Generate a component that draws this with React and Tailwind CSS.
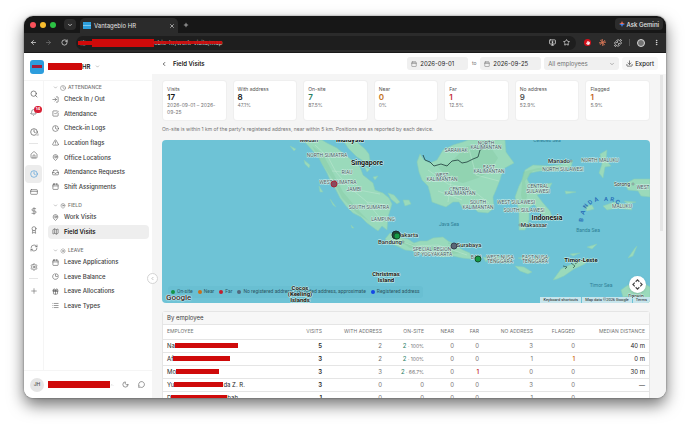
import React, { useState } from 'react';
import {
  ArrowLeft, ArrowRight, RotateCw, ChevronDown, ChevronLeft, X, Plus, Star, MonitorDown, Puzzle,
  EllipsisVertical, Search, Bell, Clock, House, CreditCard, DollarSign, Award, RefreshCw, Settings,
  LogIn, SquareCheckBig, TriangleAlert, MapPin, Inbox, Calendar, Map as MapIcon, Gift, List, Sun,
  ChartPie, Moon, MessageCircle, Download, SlidersHorizontal, ChevronUp, Hand,
} from 'lucide-react';
import clsx from 'clsx';

const NAV = [
  {
    title: 'ATTENDANCE',
    icon: Clock,
    height: 'h-[102px]',
    items: [
      { label: 'Check In / Out', icon: LogIn },
      { label: 'Attendance', icon: SquareCheckBig },
      { label: 'Check-in Logs', icon: Clock },
      { label: 'Location flags', icon: TriangleAlert },
      { label: 'Office Locations', icon: MapPin },
      { label: 'Attendance Requests', icon: Inbox },
      { label: 'Shift Assignments', icon: Calendar },
    ],
  },
  {
    title: 'FIELD',
    icon: MapPin,
    height: 'h-[29px]',
    items: [
      { label: 'Work Visits', icon: MapPin },
      { label: 'Field Visits', icon: MapIcon, active: true },
    ],
  },
  {
    title: 'LEAVE',
    icon: Sun,
    height: 'h-[58px]',
    items: [
      { label: 'Leave Applications', icon: Calendar },
      { label: 'Leave Balance', icon: ChartPie },
      { label: 'Leave Allocations', icon: Gift },
      { label: 'Leave Types', icon: List },
    ],
  },
];

const RAIL = [
  { label: 'Home', icon: House },
  { label: 'Attendance', icon: Clock, active: true },
  { label: 'Cards', icon: CreditCard },
  { label: 'Payroll', icon: DollarSign },
  { label: 'Performance', icon: Award },
  { label: 'Sync', icon: RefreshCw },
  { label: 'Settings', icon: Settings },
];

const STATS = [
  { label: 'Visits', value: '17', note: '2026-09-01 – 2026-09-25', color: 'text-neutral-900' },
  { label: 'With address', value: '8', note: '47.1%', color: 'text-neutral-900' },
  { label: 'On-site', value: '7', note: '87.5%', color: 'text-[#2a8064]' },
  { label: 'Near', value: '0', note: '0%', color: 'text-[#c2741c]' },
  { label: 'Far', value: '1', note: '12.5%', color: 'text-[#c42f3a]' },
  { label: 'No address', value: '9', note: '52.9%', color: 'text-neutral-600' },
  { label: 'Flagged', value: '1', note: '5.9%', color: 'text-[#c2621c]' },
];

const ROWS = [
  { start: 'Na', end: '', mask: 'w-[63px]', visits: 5, withAddress: 2, onSite: 2, pct: '100%', near: 0, far: 0, none: 3, flagged: 0, median: '40 m' },
  { start: 'Af', end: '', mask: 'w-[57px]', visits: 3, withAddress: 2, onSite: 2, pct: '100%', near: 0, far: 0, none: 1, flagged: 1, median: '0 m' },
  { start: 'Mo', end: '', mask: 'w-[43px]', visits: 3, withAddress: 3, onSite: 2, pct: '66.7%', near: 0, far: 1, none: 0, flagged: 0, median: '30 m' },
  { start: 'Yu', end: 'da Z. R.', mask: 'w-[49px]', visits: 3, withAddress: 0, onSite: 0, near: 0, far: 0, none: 3, flagged: 0, median: '—' },
  { start: 'D', end: 'bah', mask: 'w-[56px]', visits: 1, withAddress: 0, onSite: 0, near: 0, far: 0, none: 1, flagged: 0, median: '—' },
];

const LAND = [
  // Sumatra and its islands
  'M141 0 150 10 157 18 160 24 165 33 169 42 174 50 178 58 184 66 191 73 199 77 205 83 216 91 220 86 225 90 226 77 230 64 227 58 221 53 213 50 211 43 206 39 201 35 198 27 190 20 183 15 175 8 165 3 160 0Z',
  'M128 6 134 9 132 11Z M142 20 148 25 147 28 143 24Z M157 46 161 52 158 52Z M168 59 174 67 171 65Z M189 85 192 88 190 88Z',
  'M226 53 232 55 238 62 235 64 229 59Z M241 60 247 60 249 64 243 66Z M211 37 216 36 213 40Z M202 26 208 29 205 32Z',
  // Malay peninsula
  'M181 0 186 8 195 17 203 22 208 20 207 14 203 9 196 3 194 0Z',
  // Java
  'M223 99 228 93 234 95 240 98 246 99 252 103 258 101 265 101 271 98 281 97 286 101 292 104 301 110 308 113 309 119 300 118 291 116 280 117 271 114 260 114 251 111 243 110 235 106 228 103Z M286 103 297 104 296 106Z',
  'M311 116 318 117 316 120Z M321 117 326 118 324 122Z M330 118 337 116 341 119 351 118 348 122 336 121Z M356 118 366 117 376 119 388 117 384 121 370 121Z M353 126 362 127 370 132 366 134 358 131Z',
  // Borneo
  'M258 14 262 20 268 23 275 20 281 10 291 5 301 2 306 0 343 0 344 12 352 23 341 29 338 40 334 50 331 57 332 68 326 73 316 72 310 66 301 69 297 62 291 62 284 67 278 65 270 62 268 53 266 46 260 40 257 32 255 22Z',
  // Sulawesi
  'M360 40 363 30 371 25 388 26 401 24 411 20 409 27 396 31 378 31 368 33 365 39 368 45 378 45 390 43 386 51 375 55 381 63 388 71 391 80 385 79 378 72 372 64 367 68 367 80 363 90 357 90 357 70 353 57 357 46Z',
  // Maluku and Papua
  'M438 14 445 10 444 20 449 26 443 27 441 38 437 33 440 24Z M441 66 452 62 468 66 470 70 455 68 445 70Z M422 66 430 65 432 69 425 71Z M403 51 414 52 404 54Z',
  'M463 44 472 39 488 39 488 57 479 56 476 51 466 50Z M466 118 473 108 475 106 471 116Z M462 61 474 62 466 64Z',
  // Timor and Australia
  'M391 140 399 129 412 123 426 118 423 124 412 129 402 136 395 139Z M425 107 435 104 430 109Z M408 114 418 113 411 116Z',
  'M459 150 466 145 474 147 480 142 488 147 488 163 478 163 470 156 461 157Z',
];

const HIGHLANDS = [
  'M150 6 160 13 170 31 181 52 197 71 207 81 195 73 180 58 171 40 161 25Z',
  'M305 6 327 5 336 18 327 32 316 38 301 43 287 39 276 27 289 22Z',
  'M238 101 258 106 278 108 300 113 290 114 268 111 248 108Z',
  'M361 32 376 28 400 27 371 31 363 41 365 56 362 68 359 55Z',
];

const REGIONS = [
  [165, 17, 'NORTH SUMATRA'], [185, 34, 'RIAU'], [176, 44, 'WEST SUMATRA'], [192, 51, 'JAMBI'],
  [207, 69, 'SOUTH SUMATRA'], [221, 81, 'LAMPUNG'], [270, 111, 'SPECIAL REGION'], [271, 116, 'OF YOGYAKARTA'],
  [314, 119, 'BALI'], [338, 119, 'WEST NUSA'], [338, 123, 'TENGGARA'], [373, 119, 'EAST NUSA'], [373, 123, 'TENGGARA'],
  [324, 5, 'NORTH'], [324, 9, 'KALIMANTAN'], [294, 12, 'SARAWAK'], [327, 29, 'EAST'], [327, 33, 'KALIMANTAN'],
  [280, 37, 'WEST'], [280, 41, 'KALIMANTAN'], [298, 51, 'CENTRAL'], [298, 55, 'KALIMANTAN'],
  [316, 64, 'SOUTH'], [316, 69, 'KALIMANTAN'], [438, 22, 'NORTH MALUKU'], [401, 31, 'NORTH SULAWESI'],
  [376, 48, 'CENTRAL'], [376, 53, 'SULAWESI'], [354, 64, 'WEST SULAWESI'], [362, 72, 'SOUTH SULAWESI'],
  [460, 68, 'MALUKU'], [481, 49, 'WEST'],
];

const CITIES = [
  [147, 2, 'Medan'], [246, 97, 'Jakarta'], [228, 104, 'Bandung'], [307, 107, 'Surabaya'],
  [397, 23, 'Manado'], [372, 87, 'Makassar'],
];

const COUNTRIES = [
  [188, 2, 'Malaysia'], [205, 25, 'Singapore'], [385, 80, 'Indonesia'],
];

const ISLANDS = [
  [419, 122, 'Timor-Leste'], [224, 136, 'Christmas'], [224, 142, 'Island'],
  [138, 150, 'Cocos'], [138, 156, '(Keeling)'], [138, 162, 'Islands'],
];

const SEAS = [
  [287, 86, 'Java Sea'], [385, 2, 'Celebes Sea'], [426, 92, 'Banda Sea'], [439, 147, 'Timor Sea'],
];

const PINS = [
  [172, 44, 3, '#8b4a5c', '#a82335'], [234, 95, 4, '#1f4a3a', '#1c2b2b'], [235, 96, 3, '#169a45', '#14532d'],
  [292, 106, 3, '#5b6675', '#374151'], [316, 119, 3, '#169a45', '#14532d'],
];

const LEGEND = [
  { label: 'On-site', dot: 'bg-[#159447]' },
  { label: 'Near', dot: 'bg-[#c9701b]' },
  { label: 'Far', dot: 'bg-[#c21f2f]' },
  { label: 'No registered address / recorded address, approximate', dot: 'bg-[#52687c]' },
  { label: 'Registered address', dot: 'bg-[#1447e6]' },
];

const BrowserChrome = () => {
  const [url, setUrl] = useState('');

  return (
    <div className="shrink-0 text-neutral-200">
      {/* Tab strip */}
      <div className="flex h-[17px] items-end bg-[#171717] pl-[6px] pr-[3px]">
        <div className="flex h-[15px] items-center gap-[4px] pb-px">
          <span className="size-[6px] rounded-full bg-[#f9515a]"></span>
          <span className="size-[6px] rounded-full bg-[#f8bd2e]"></span>
          <span className="size-[6px] rounded-full bg-[#2cc244]"></span>
        </div>
        <button className="mb-[3px] ml-[8px] flex h-[11px] w-[12px] items-center justify-center rounded-[4px] bg-[#2c2c2c]" aria-label="Search tabs">
          <ChevronDown className="size-[6px]" strokeWidth={3} />
        </button>
        <div className="ml-[4px] flex h-[15px] w-[98px] items-center rounded-t-[5px] bg-[#2b2b2b] px-[3px]">
          <span className="flex h-[7px] w-[8px] items-center bg-[#2d9fdd]"><span className="h-px w-full bg-[#7cc8ee]"></span></span>
          <span className="ml-[3px] flex-1 text-[6px]">Vantagebio HR</span>
          <button aria-label="Close tab"><X className="size-[6px]" strokeWidth={2.5} /></button>
        </div>
        <button className="mb-[5px] ml-[5px]" aria-label="New tab"><Plus className="size-[6px]" strokeWidth={2.5} /></button>
        <button className="mb-[3px] ml-auto flex h-[12px] items-center gap-[2px] rounded-[4px] bg-[#2c2c2c] px-[4px] text-[6px] font-medium">
          <svg viewBox="0 0 12 12" className="size-[6px]">
            <path d="M6 0Q6.6 5.4 12 6H0Q5.4 5.4 6 0Z" fill="#e8725c" />
            <path d="M6 12Q5.4 6.6 0 6H12Q6.6 6.6 6 12Z" fill="#4285f4" />
          </svg>
          Ask Gemini
        </button>
      </div>

      {/* Toolbar */}
      <div className="flex h-[20px] items-center border-b border-[#1a1a1a] bg-[#2b2b2b] px-[6px]">
        <button aria-label="Back"><ArrowLeft className="size-[7px]" strokeWidth={2.5} /></button>
        <button className="ml-[8px] text-neutral-500" aria-label="Forward"><ArrowRight className="size-[7px]" strokeWidth={2.5} /></button>
        <button className="ml-[9px]" aria-label="Reload"><RotateCw className="size-[7px]" strokeWidth={2.5} /></button>
        <label className="ml-[8px] flex h-[14px] flex-1 items-center rounded-full bg-[#1e1e1e] pl-px pr-[6px]">
          <span className="flex h-[9px] items-center">
            <SlidersHorizontal className="ml-[3px] size-[6px]" />
            <span className="ml-[-8px] h-[4px] w-[14px] bg-[#cf0a0a]"></span>
            <span className="h-[8px] w-[62px] bg-[#cf0a0a]"></span>
          </span>
          <span className="relative text-[6px] text-neutral-300">
            obio-hr/work-visits/map
            <span className="absolute left-0 top-[3px] h-[3px] w-full bg-[#cf0a0a]/90"></span>
          </span>
          <input className="min-w-0 flex-1 bg-transparent text-[6px] outline-none" aria-label="Address" value={url} onChange={(e) => setUrl(e.target.value)} />
          <MonitorDown className="size-[7px]" strokeWidth={2.5} />
          <Star className="ml-[7px] size-[7px]" strokeWidth={2.5} />
        </label>
        <span className="ml-[8px] flex size-[7px] items-center justify-center rounded-full bg-[#d3101b]"><Hand className="size-[4px] fill-white text-white" /></span>
        <svg viewBox="0 0 16 16" className="ml-[8px] size-[7px] text-[#d97757]" stroke="currentColor" strokeWidth="1.5">
          <path d="M8 0V16M0 8H16M2.3 2.3 13.7 13.7M13.7 2.3 2.3 13.7M5 .8 11 15.2M15.2 5 .8 11" />
        </svg>
        <Puzzle className="ml-[8px] size-[8px]" strokeWidth={2.5} />
        <span className="ml-[7px] h-[7px] w-px bg-neutral-600"></span>
        <span className="ml-[7px] size-[8px] rounded-full border border-neutral-300 bg-neutral-500"></span>
        <EllipsisVertical className="ml-[8px] size-[7px]" strokeWidth={3} />
      </div>
    </div>
  );
};

const Rail = () => (
  <div className="w-[20px] shrink-0 border-r border-neutral-100 px-px pt-[4px] text-neutral-600">
    <div className="grid h-[56px] auto-rows-fr justify-items-center">
      <button aria-label="Search"><Search className="size-[8px]" /></button>
      <button className="relative" aria-label="Notifications">
        <Bell className="size-[7px]" />
        <span className="absolute -right-[5px] top-[2px] flex h-[7px] w-[8px] items-center justify-center rounded-full bg-[#d81f35] text-[4px] font-bold text-white">14</span>
      </button>
      <button className="relative" aria-label="Timer">
        <Clock className="size-[8px]" />
        <span className="absolute -right-px bottom-[5px] size-[3px] rounded-full bg-neutral-300"></span>
      </button>
    </div>
    <div className="mx-[4px] my-[2px] h-px bg-neutral-200"></div>
    <div className="grid h-[130px] auto-rows-fr">
      {RAIL.map(({ label, icon: Icon, active }) => (
        <button
          key={label}
          aria-label={label}
          className={clsx('flex items-center justify-center rounded-[4px]', active && 'bg-[#ececec] text-[#3f95d6]')}
        >
          <Icon className="size-[8px]" strokeWidth={1.75} />
        </button>
      ))}
    </div>
    <div className="mx-[4px] my-[2px] h-px bg-neutral-200"></div>
    <button className="mt-[8px] flex w-full justify-center text-neutral-500" aria-label="Add"><Plus className="size-[8px]" /></button>
  </div>
);

const Sidebar = () => (
  <aside className="relative flex w-[128px] shrink-0 flex-col bg-white">
    <button className="flex h-[28px] shrink-0 items-center border-b border-neutral-100 pl-[6px]">
      <span className="flex size-[14px] items-center rounded-[3px] bg-[#2d9ddd] px-[2px]"><span className="h-[3px] w-full bg-[#a51d3a]"></span></span>
      <span className="ml-[4px] h-[7px] w-[34px] bg-[#cf0a0a]"></span>
      <span className="text-[6px] font-semibold text-neutral-900">HR</span>
      <ChevronDown className="ml-[5px] size-[5px] text-neutral-500" />
    </button>

    <div className="flex min-h-0 flex-1">
      <Rail />
      <nav className="flex min-w-0 flex-1 flex-col gap-[5px] pl-[4px] pr-[3px]">
        {NAV.map(({ title, icon: Icon, height, items }) => (
          <div key={title}>
            <div className="flex h-[11px] items-center gap-[2px] pl-[5px] pt-[2px] text-[5px] font-medium text-neutral-500">
              <ChevronDown className="size-[5px]" />
              <Icon className="size-[6px]" />
              {title}
            </div>
            <div className={clsx('grid auto-rows-fr', height)}>
              {items.map(({ label, icon: ItemIcon, active }) => (
                <a
                  key={label}
                  href="#"
                  className={clsx(
                    'flex items-center gap-[5px] rounded-[4px] pl-[4px] text-[6px] leading-none whitespace-nowrap',
                    active ? 'bg-[#eeeeee] font-semibold text-neutral-900' : 'font-medium text-neutral-700'
                  )}
                >
                  <ItemIcon className="size-[7px] text-neutral-600" />
                  {label}
                </a>
              ))}
            </div>
          </div>
        ))}
      </nav>
    </div>

    <div className="flex h-[28px] shrink-0 items-center border-t border-neutral-100 pl-[6px] text-neutral-600">
      <span className="flex size-[14px] items-center justify-center rounded-full bg-neutral-200 text-[5px] font-medium">JH</span>
      <span className="ml-[4px] h-[7px] w-[62px] bg-[#cf0a0a]"></span>
      <ChevronUp className="size-[4px] text-neutral-400" />
      <button className="ml-[8px]" aria-label="Dark mode"><Moon className="size-[7px]" /></button>
      <button className="ml-[9px]" aria-label="Messages"><MessageCircle className="size-[7px]" /></button>
    </div>

    {/* Collapse handle sits on the border */}
    <button className="absolute -right-[6px] top-[220px] z-10 flex size-[11px] items-center justify-center rounded-full border border-neutral-300 bg-white text-neutral-500" aria-label="Collapse sidebar">
      <ChevronLeft className="size-[5px]" />
    </button>
  </aside>
);

const DateField = ({ label, value, onChange }) => (
  <label className="flex h-[13px] w-[61px] items-center gap-[3px] rounded-[3px] bg-[#f0f0f0] pl-[4px] text-[6px] text-neutral-800">
    <Calendar className="size-[6px] shrink-0 text-neutral-500" />
    <input aria-label={label} className="w-full min-w-0 bg-transparent outline-none" value={value} onChange={(e) => onChange(e.target.value)} />
  </label>
);

const MapLabels = ({ items, className }) => (
  <g className={className} textAnchor="middle">
    {items.map(([x, y, text]) => <text key={text + x + y} x={x} y={y}>{text}</text>)}
  </g>
);

const VisitMap = () => (
  <div className="relative mt-[7px] h-[163px] shrink-0 overflow-hidden rounded-[4px] bg-[#6ec3d6] font-['Roboto',sans-serif]">
    <svg viewBox="0 0 488 163" preserveAspectRatio="xMidYMid slice" className="absolute inset-0 size-full">
      <g fill="#9adabb" stroke="#87cfb8" strokeWidth=".6" strokeLinejoin="round">
        {LAND.map((d) => <path key={d} d={d} />)}
      </g>
      <g fill="#84caa3" opacity=".4">
        {HIGHLANDS.map((d) => <path key={d} d={d} />)}
      </g>
      <g fill="none" stroke="#b9e5cf" strokeWidth=".6">
        <path d="M153 5 166 17 174 32 187 47 204 61 219 79M170 31 191 33M186 48 218 54M205 62 226 65" />
        <path d="M266 30 286 44 309 49 327 63M276 51 300 60M307 9 314 35 337 41M290 35 286 62" />
        <path d="M230 98 252 106 276 105 305 115" />
      </g>
      <path d="M261 15 263 20 268 22 272 26 279 24 285 26 290 21 296 20 300 23 305 22 311 19 316 17 318 10 322 8 325 2 328 0" fill="none" stroke="#2b4d48" strokeWidth=".9" />
      <path d="M401 126 405 127 403 129M409 123 413 126 411 128M416 122 413 124" fill="none" stroke="#2b4d48" strokeWidth=".7" />
    </svg>

    <div className="absolute bottom-[5px] left-[6px] flex h-[12px] items-center gap-[5px] rounded-[3px] bg-[#62b8cc]/40 px-[3px] text-[5px] text-[#2d5663]">
      {LEGEND.map(({ label, dot }) => (
        <span key={label} className="flex items-center gap-[2px] whitespace-nowrap">
          <span className={clsx('size-[4px] rounded-full', dot)}></span>
          {label}
        </span>
      ))}
    </div>

    <svg viewBox="0 0 488 163" preserveAspectRatio="xMidYMid slice" className="pointer-events-none absolute inset-0 size-full">
      <g stroke="#d8f1ea" strokeWidth="1" strokeLinejoin="round" className="[paint-order:stroke]">
        <MapLabels items={REGIONS} className="fill-[#43585a] text-[5px]" />
        <MapLabels items={CITIES} className="fill-[#20292c] text-[6px] font-medium" />
        <MapLabels items={COUNTRIES} className="fill-[#0c1113] text-[7px] font-bold" />
        <MapLabels items={ISLANDS} className="fill-[#0c1113] text-[6px] font-bold" />
        <MapLabels items={[[460, 46, 'Sorong'], [474, 158, 'Darwin']]} className="fill-[#20292c] text-[5px]" />
      </g>
      <MapLabels items={SEAS} className="fill-[#2f7f95] text-[5px]" />
      <text
        x="421 422 424 428 433 437 442 448 453"
        y="82 75 69 65 62 61 61 61 63"
        rotate="-85 -70 -55 -40 -20 0 0 10 25"
        className="fill-[#1f66b5] text-[6px] font-medium"
      >
        BANDA ARC
      </text>
      <g fill="#d8f1ea" stroke="#43585a" strokeWidth=".5">
        <circle cx="241" cy="102" r="1" />
        <circle cx="409" cy="21" r="1" />
        <circle cx="358" cy="85" r="1" />
        <circle cx="471" cy="44" r="1" />
      </g>
      {PINS.map(([x, y, r, fill, stroke]) => (
        <circle key={x + '-' + y} cx={x} cy={y} r={r} fill={fill} stroke={stroke} />
      ))}
    </svg>

    <span className="absolute bottom-0 left-[4px] text-[8px] leading-[11px] font-medium text-neutral-800 [text-shadow:0_0_1px_white,0_0_1px_white,0_0_2px_white]">Google</span>
    <button className="absolute right-[4px] bottom-[10px] flex size-[17px] items-center justify-center rounded-full bg-white shadow" aria-label="Map camera controls">
      <svg viewBox="0 0 24 24" className="size-[11px]" fill="none" stroke="#444" strokeWidth="2.5">
        <path d="M8 6 12 2 16 6M8 18 12 22 16 18M6 8 2 12 6 16M18 8 22 12 18 16" />
      </svg>
    </button>
    <div className="absolute right-0 bottom-0 flex h-[6px] gap-px text-[4px] leading-[6px] text-neutral-900">
      <button className="bg-[#c7e5ec] px-[3px]">Keyboard shortcuts</button>
      <span className="bg-[#c7e5ec] px-[3px]">Map data ©2026 Google</span>
      <a href="#" className="bg-[#c7e5ec] px-[3px]">Terms</a>
    </div>
  </div>
);

const TH = 'pr-[4px] font-normal';

const EmployeePanel = () => (
  <section className="mt-[8px] shrink-0 rounded-t-[3px] border border-neutral-200 bg-white">
    <h2 className="flex h-[13px] items-center border-b border-neutral-200 bg-[#f7f7f7] pl-[4px] text-[6px] leading-none text-neutral-700">By employee</h2>
    <table className="w-full table-fixed text-right text-[6px] leading-none text-neutral-500">
      <thead>
        <tr className="h-[14px] border-b border-neutral-200 text-[5px] whitespace-nowrap">
          <th className="pl-[4px] text-left font-normal">EMPLOYEE</th>
          <th className={clsx(TH, 'w-[40px]')}>VISITS</th>
          <th className={clsx(TH, 'w-[60px]')}>WITH ADDRESS</th>
          <th className={clsx(TH, 'w-[42px]')}>ON-SITE</th>
          <th className={clsx(TH, 'w-[30px]')}>NEAR</th>
          <th className={clsx(TH, 'w-[25px]')}>FAR</th>
          <th className={clsx(TH, 'w-[54px]')}>NO ADDRESS</th>
          <th className={clsx(TH, 'w-[42px]')}>FLAGGED</th>
          <th className={clsx(TH, 'w-[70px]')}>MEDIAN DISTANCE</th>
        </tr>
      </thead>
      <tbody>
        {ROWS.map((row) => (
          <tr key={row.start} className="h-[13px] border-b border-neutral-200">
            <td className="pl-[4px] text-left text-neutral-800">
              <span className="flex items-center whitespace-nowrap">
                {row.start}
                <span className={clsx('h-[5px] bg-[#cf0a0a]', row.mask)}></span>
                {row.end}
              </span>
            </td>
            <td className="pr-[4px] font-semibold text-neutral-800">{row.visits}</td>
            <td className="pr-[4px]">{row.withAddress}</td>
            <td className="pr-[4px]">
              {row.pct ? <><span className="text-[#2a8064]">{row.onSite}</span><span className="text-[5px]"> · {row.pct}</span></> : row.onSite}
            </td>
            <td className="pr-[4px]">{row.near}</td>
            <td className={clsx('pr-[4px]', row.far > 0 && 'font-semibold text-[#c42f3a]')}>{row.far}</td>
            <td className="pr-[4px]">{row.none}</td>
            <td className={clsx('pr-[4px]', row.flagged > 0 && 'font-semibold text-[#d0762c]')}>{row.flagged}</td>
            <td className="pr-[4px] text-neutral-800">{row.median}</td>
          </tr>
        ))}
      </tbody>
    </table>
  </section>
);

const App = () => {
  const [from, setFrom] = useState('2026-09-01');
  const [to, setTo] = useState('2026-09-25');

  return (
    <div className="h-screen bg-white px-[24px] pt-[16px] pb-[31px] font-['Inter','Liberation_Sans',sans-serif]">
      <div className="flex h-full flex-col overflow-hidden rounded-[9px] bg-white shadow-[0_7px_16px_rgba(0,0,0,0.55),0_0_2px_rgba(0,0,0,0.5)]">
        <BrowserChrome />
        <div className="flex min-h-0 flex-1">
          <Sidebar />
          <main className="relative flex min-w-0 flex-1 flex-col bg-[#f5f5f5]">
            <header className="flex h-[22px] shrink-0 items-center border-b border-neutral-100 bg-white px-[8px]">
              <button className="ml-px" aria-label="Back"><ChevronLeft className="size-[6px]" strokeWidth={2.5} /></button>
              <h1 className="ml-[6px] flex-1 text-[6px] font-semibold text-neutral-900">Field Visits</h1>
              <DateField label="From" value={from} onChange={setFrom} />
              <span className="w-[12px] text-center text-[5px] text-neutral-500">to</span>
              <DateField label="To" value={to} onChange={setTo} />
              <div className="relative ml-[3px] flex items-center">
                <select aria-label="Employee" className="h-[13px] w-[75px] appearance-none rounded-[3px] bg-[#f0f0f0] pl-[4px] text-[6px] text-neutral-500">
                  <option>All employees</option>
                </select>
                <ChevronDown className="pointer-events-none absolute right-[4px] size-[6px] text-neutral-500" />
              </div>
              <button className="ml-[3px] flex h-[13px] items-center gap-[2px] rounded-[3px] bg-[#f7f7f7] px-[4px] text-[6px] font-medium text-neutral-800">
                <Download className="size-[7px]" />
                Export
              </button>
            </header>

            <div className="flex min-h-0 flex-1 flex-col overflow-hidden pt-[5px] pr-[16px] pl-[10px]">
              <div className="grid shrink-0 grid-cols-7 gap-[6px]">
                {STATS.map(({ label, value, note, color }) => (
                  <div key={label} className="h-[41px] rounded-[4px] border border-neutral-200/60 bg-white px-[4px] pt-[5px]">
                    <p className="text-[5px] leading-[7px] text-neutral-600">{label}</p>
                    <p className={clsx('text-[8px] leading-[9px] font-semibold', color)}>{value}</p>
                    <p className="text-[5px] leading-[7px] text-neutral-500">{note}</p>
                  </div>
                ))}
              </div>
              <p className="mt-[5px] text-[5px] leading-[7px] whitespace-nowrap text-neutral-500">
                On-site is within 1 km of the party's registered address, near within 5 km. Positions are as reported by each device.
              </p>
              <VisitMap />
              <EmployeePanel />
            </div>
            <span className="absolute top-[22px] right-[3px] h-[156px] w-[3px] bg-neutral-200"></span>
          </main>
        </div>
      </div>
    </div>
  );
};

export default App;
